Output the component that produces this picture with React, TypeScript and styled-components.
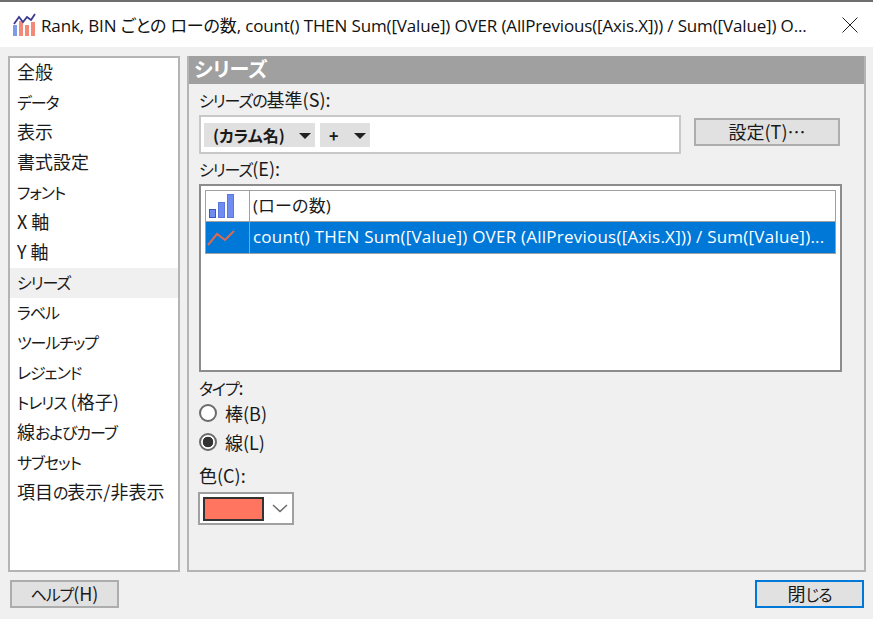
import React from "react";
import styled, { createGlobalStyle } from "styled-components";

const Global = createGlobalStyle`
    html, body {
        margin: 0;
        padding: 0;
        background: #f0f0f0;
    }
    body {
        width: 873px;
        height: 619px;
        overflow: hidden;
        color: #1a1a1a;
        font-family: "Noto Sans CJK JP", "Noto Sans", sans-serif;
        font-feature-settings: "palt";
        font-size: 18px;
    }
`;

const Dialog = styled.div`
    width: 873px;
    height: 619px;
    display: flex;
    flex-direction: column;
`;

const TitleBar = styled.div`
    height: 45px;
    flex: none;
    border-top: 2px solid #6e6e6e;
    background: #fff;
    display: flex;
    align-items: center;
    padding: 0 15px 0 13px;
    gap: 5px;
`;

const TitleText = styled.div`
    flex: 1;
    font-family: "Open Sans", "Noto Sans CJK JP", sans-serif;
    font-size: 17px;
    letter-spacing: -0.15px;
    color: #111;
    white-space: nowrap;
`;

const Main = styled.div`
    display: flex;
    gap: 7px;
    height: 516px;
    margin: 9px 7px 0 8px;
`;

const NavList = styled.ul`
    width: 172px;
    box-sizing: border-box;
    margin: 0;
    padding: 0;
    list-style: none;
    background: #fff;
    border: 2px solid #b4b4b4;
`;

const NavItem = styled.li<{ $active?: boolean }>`
    height: 30px;
    line-height: 26px;
    padding-left: 7px;
    white-space: nowrap;
    background: ${(p) => (p.$active ? "#f0f0f0" : "transparent")};
`;

// メイリオUIのかなは漢字より細いので、かなだけ小さく詰める
const KanaRun = styled.span`
    font-size: 16px;
    letter-spacing: -1.1px;
`;

const Jp = ({ text }: { text: string }) => (
    <>
        {text.split(/([\u3040-\u30ff]+)/).map((part, i) =>
            i % 2 === 1 ? <KanaRun key={i}>{part}</KanaRun> : part
        )}
    </>
);

const Panel = styled.section`
    flex: 1;
    box-sizing: border-box;
    border: 2px solid #b4b4b4;
    border-top: 0;
    padding: 0 0 0 10px;
`;

const PanelHead = styled.h2`
    height: 28px;
    margin: 0 0 0 -10px;
    padding-left: 5px;
    background: #a0a0a0;
    color: #fff;
    font-size: 20px;
    font-weight: 700;
    line-height: 26px;
`;

const FieldLabel = styled.div<{ $top: number }>`
    margin-top: ${(p) => p.$top}px;
    height: 24px;
    line-height: 24px;
`;

const BaseRow = styled.div`
    display: flex;
    align-items: flex-start;
    gap: 13px;
    margin: 4px 0 0 0;
`;

const CategoryBox = styled.div`
    width: 482px;
    height: 39px;
    box-sizing: border-box;
    background: #fff;
    border: 2px solid #c8c8c8;
    display: flex;
    align-items: center;
    gap: 5px;
    padding-left: 3px;
`;

const Chip = styled.div<{ $w: number }>`
    width: ${(p) => p.$w}px;
    height: 24px;
    box-sizing: border-box;
    background: #e0e0e0;
    display: flex;
    align-items: center;
    justify-content: space-between;
    padding: 0 4px 0 9px;
    font-weight: 700;
    font-size: 16px;
`;

const Arrow = styled.span`
    width: 0;
    height: 0;
    border-left: 6px solid transparent;
    border-right: 6px solid transparent;
    border-top: 6px solid #222;
    margin-top: 2px;
`;

const FlatButton = styled.button<{ $w: number; $primary?: boolean; $top?: number }>`
    width: ${(p) => p.$w}px;
    height: 28px;
    margin-top: ${(p) => p.$top ?? 0}px;
    box-sizing: border-box;
    padding: 0 0 2px;
    background: #e1e1e1;
    border: 2px solid ${(p) => (p.$primary ? "#0078d7" : "#adadad")};
    color: #1a1a1a;
    font: inherit;
    font-feature-settings: "palt";
    line-height: 22px;
`;

const SeriesBox = styled.div`
    width: 643px;
    height: 188px;
    box-sizing: border-box;
    margin-top: 4px;
    padding: 4px;
    background: #fff;
    border: 2px solid #8c8c8c;
`;

const SeriesRow = styled.div<{ $selected?: boolean }>`
    width: 631px;
    height: 32px;
    box-sizing: border-box;
    display: flex;
    border: 1px solid #a0a0a0;
    border-top-width: ${(p) => (p.$selected ? 0 : 1)}px;
    background: ${(p) => (p.$selected ? "#0078d7" : "#fff")};
    color: ${(p) => (p.$selected ? "#fff" : "#1a1a1a")};
`;

const IconCell = styled.div`
    width: 44px;
    flex: none;
    box-sizing: border-box;
    border-right: 1px solid #a0a0a0;
    display: flex;
    align-items: center;
    padding-left: 1px;
`;

const NameCell = styled.div`
    flex: 1;
    padding-left: 3px;
    line-height: 29px;
    font-family: "Open Sans", "Noto Sans CJK JP", sans-serif;
    font-size: 17px;
    letter-spacing: 0.23px;
    white-space: nowrap;
    overflow: hidden;
`;

const RadioRow = styled.label`
    display: flex;
    align-items: center;
    gap: 8px;
    height: 29px;
`;

const RadioGroup = styled.div`
    margin-top: -1px;
`;

const RadioDot = styled.span<{ $on?: boolean }>`
    width: 18px;
    height: 18px;
    box-sizing: border-box;
    border-radius: 50%;
    border: 2px solid #6a6a6a;
    background: ${(p) =>
        p.$on ? "radial-gradient(circle, #333 0 5px, #fff 5.6px)" : "#fff"};
`;

const ColorCombo = styled.div`
    width: 96px;
    height: 33px;
    box-sizing: border-box;
    margin: 5px 0 0 -1px;
    background: #fff;
    border: 2px solid #a0a0a0;
    display: flex;
    align-items: center;
    padding-left: 3px;
    gap: 8px;
`;

const Swatch = styled.div`
    width: 61px;
    height: 24px;
    box-sizing: border-box;
    background: #ff7560;
    border: 2px solid #333;
`;

const Footer = styled.div`
    display: flex;
    justify-content: space-between;
    margin: 8px 9px 0 10px;
`;

const navItems = [
    "全般",
    "データ",
    "表示",
    "書式設定",
    "フォント",
    "X 軸",
    "Y 軸",
    "シリーズ",
    "ラベル",
    "ツールチップ",
    "レジェンド",
    "トレリス (格子)",
    "線およびカーブ",
    "サブセット",
    "項目の表示/非表示",
];

const AppIcon = () => (
    <svg width="23" height="23" viewBox="0 0 23 23">
        <rect x="0" y="12" width="4" height="11" fill="#7f9be8" />
        <rect x="6" y="8" width="4" height="15" fill="#f28a7a" />
        <rect x="12" y="12" width="4" height="11" fill="#f28a7a" />
        <rect x="18" y="9" width="4" height="14" fill="#f28a7a" />
        <polyline points="1,11 6,4 10,9 14,4 18,7 22,1" fill="none" stroke="#3b3b8f" strokeWidth="1.8" />
    </svg>
);

const BarsIcon = () => (
    <svg width="28" height="26" viewBox="0 0 28 26">
        <rect x="2.5" y="16.5" width="6" height="8" fill="#6f8df0" stroke="#3d55b5" />
        <rect x="11.5" y="9.5" width="6" height="15" fill="#6f8df0" stroke="#5a78e0" />
        <rect x="20.5" y="1.5" width="6" height="23" fill="#6f8df0" stroke="#5a78e0" />
    </svg>
);

const LineIcon = () => (
    <svg width="28" height="18" viewBox="0 0 28 18">
        <polyline points="1,16 10,5 18,11 27,2" fill="none" stroke="#dc6a50" strokeWidth="2" />
    </svg>
);

const CloseIcon = () => (
    <svg width="16" height="16" viewBox="0 0 16 16">
        <path d="M0.5 0.5 L15.5 15.5 M15.5 0.5 L0.5 15.5" stroke="#222" strokeWidth="1" fill="none" />
    </svg>
);

const ChevronIcon = () => (
    <svg width="16" height="9" viewBox="0 0 16 9">
        <path d="M1 1 L8 7.5 L15 1" stroke="#666" strokeWidth="1.4" fill="none" />
    </svg>
);

const App = () => {
    return (
        <Dialog>
            <Global />
            <TitleBar>
                <AppIcon />
                <TitleText>
                    Rank, BIN ごとの ローの数, count() THEN Sum([Value]) OVER (AllPrevious([Axis.X])) / Sum([Value]) O...
                </TitleText>
                <CloseIcon />
            </TitleBar>
            <Main>
                <NavList>
                    {navItems.map((item) => (
                        <NavItem key={item} $active={item === "シリーズ"}>
                            <Jp text={item} />
                        </NavItem>
                    ))}
                </NavList>
                <Panel>
                    <PanelHead>シリーズ</PanelHead>
                    <FieldLabel $top={3}>
                        <Jp text="シリーズの基準(S):" />
                    </FieldLabel>
                    <BaseRow>
                        <CategoryBox>
                            <Chip $w={111}>
                                (カラム名)
                                <Arrow />
                            </Chip>
                            <Chip $w={50}>
                                +
                                <Arrow />
                            </Chip>
                        </CategoryBox>
                        <FlatButton $w={146} $top={3}>
                            設定(T)…
                        </FlatButton>
                    </BaseRow>
                    <FieldLabel $top={2}>
                        <Jp text="シリーズ(E):" />
                    </FieldLabel>
                    <SeriesBox>
                        <SeriesRow>
                            <IconCell>
                                <BarsIcon />
                            </IconCell>
                            <NameCell>(ローの数)</NameCell>
                        </SeriesRow>
                        <SeriesRow $selected>
                            <IconCell>
                                <LineIcon />
                            </IconCell>
                            <NameCell>count() THEN Sum([Value]) OVER (AllPrevious([Axis.X])) / Sum([Value])...</NameCell>
                        </SeriesRow>
                    </SeriesBox>
                    <FieldLabel $top={3}>
                        <Jp text="タイプ:" />
                    </FieldLabel>
                    <RadioGroup>
                        <RadioRow>
                            <RadioDot />
                            棒(B)
                        </RadioRow>
                        <RadioRow>
                            <RadioDot $on />
                            線(L)
                        </RadioRow>
                    </RadioGroup>
                    <FieldLabel $top={7}>色(C):</FieldLabel>
                    <ColorCombo>
                        <Swatch />
                        <ChevronIcon />
                    </ColorCombo>
                </Panel>
            </Main>
            <Footer>
                <FlatButton $w={109}>
                    <Jp text="ヘルプ(H)" />
                </FlatButton>
                <FlatButton $w={109} $primary>
                    閉<Jp text="じる" />
                </FlatButton>
            </Footer>
        </Dialog>
    );
};

export default App;
